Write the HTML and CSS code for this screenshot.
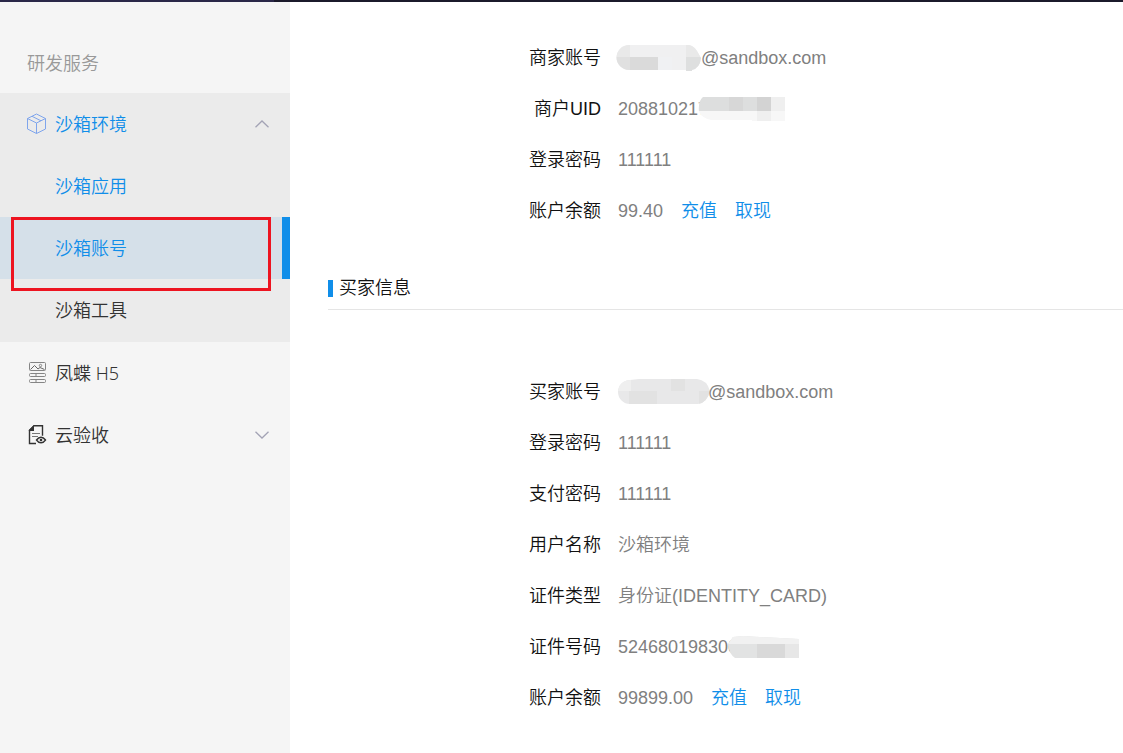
FILE: index.html
```html
<!DOCTYPE html>
<html lang="zh-CN">
<head>
<meta charset="utf-8">
<meta name="viewport" content="width=device-width, initial-scale=1">
<title>沙箱账号</title>
<link rel="stylesheet" href="styles.css">
</head>
<body>
<header class="topbar"><span class="topbar-brand"></span></header>
<div class="layout">
  <nav class="sidebar" aria-label="研发服务">
    <h2 class="sidebar-title">研发服务</h2>
    <div class="group">
      <button class="item item-blue" type="button" aria-expanded="true">
        <svg class="icon" viewBox="0 0 20 22" fill="none" stroke="#7fa5ec" stroke-width="1" stroke-linejoin="round"><path d="M9.500 1 18.500 5.500v10.500L9.500 20.500.5 16V5.500zM.5 5.500l9 4.500 9-4.500M9.500 10v10.500M5 3.300l9 4.500"/></svg>
        <span class="item-text">沙箱环境</span>
        <svg class="arrow" viewBox="0 0 14 8" fill="none" stroke="#a3a3b5" stroke-width="1.300"><path d="M.5 7.200 7 1l6.500 6.200"/></svg>
      </button>
      <a class="item sub item-blue" href="#app">沙箱应用</a>
      <div class="current">
        <a class="item sub item-blue item-active" href="#account" aria-current="page">沙箱账号</a>
        <span class="highlight"></span>
      </div>
      <a class="item sub" href="#tools">沙箱工具</a>
    </div>
    <a class="item" href="#h5">
      <svg class="icon" viewBox="0 0 20 22" fill="none" stroke="#858585" stroke-width="1"><rect x="2.500" y=".5" width="16" height="8" rx="1"/><path stroke="#666" d="m3.500 7.500 4-4 3.500 3.500 2-1.500 4.500 2"/><circle cx="13.500" cy="3.500" r="1.200"/><rect x="2.500" y="11.500" width="16" height="3" rx="1"/><rect x="2.500" y="17.500" width="16" height="3" rx="1"/><path d="M9 11.500v3M9 17.500v3"/></svg>
      <span class="item-text">凤蝶 H5</span>
    </a>
    <button class="item" type="button" aria-expanded="false">
      <svg class="icon" viewBox="0 0 20 22" fill="none" stroke="#333" stroke-width="1.400"><path d="M9 19.500H2.500V6.500L7 1.700h8.500v10"/><path d="M1.800 7V6L7 1v6z" fill="#333" stroke="none"/><path d="M5 9.500h8M5 12.500h6" stroke="#777" stroke-width="1"/><path d="M9.500 16q2-2.800 4.500-2.800t4.500 2.800q-2 2.800-4.500 2.800T9.500 16z" stroke-width="1.400"/><circle cx="14" cy="16" r="1.300" fill="#333" stroke="none"/></svg>
      <span class="item-text">云验收</span>
      <svg class="arrow" viewBox="0 0 14 8" fill="none" stroke="#a3a3b5" stroke-width="1.300"><path d="M.5.8 7 7 13.500.8"/></svg>
    </button>
  </nav>
  <main class="content">
    <dl class="info">
      <dt>商家账号</dt>
      <dd><svg class="mask mask-merchant" viewBox="0 0 85 26"><clipPath id="m1"><path d="M13 0h60q5 1 8 6l4 7q-1 10-9 12v1h-6v-1H13A12 12 0 0 1 13 0z"/></clipPath><g clip-path="url(#m1)"><path fill="#f0f0f1" d="M0 0h85v26H0z"/><path fill="#e9e9e9" d="M0 0h14v12H0zM70 0h15v12H70z"/><path fill="#dadada" d="M14 12h28v14H14z"/><path fill="#e0e0e0" d="M0 12h14v14H0z"/><path fill="#f0f1f3" d="M42 12h14v14H42z"/><path fill="#dedfdf" d="M70 12h15v14H70z"/></g></svg>@sandbox.com</dd>
      <dt>商户UID</dt>
      <dd>208810217<svg class="mask mask-uid" viewBox="0 0 87 24"><clipPath id="m2"><path d="M5 0h82v24H54v-1H13Q4 21 1 15 0 4 5 0z"/></clipPath><g clip-path="url(#m2)"><path fill="#f7f7f7" d="M0 0h87v24H0z"/><path fill="#dddede" d="M0 0h45v14H0z"/><path fill="#d7d7d7" d="M31 0h14v14H31z"/><path fill="#dddede" d="M45 0h14v14H45z"/><path fill="#d3d3d3" d="M59 0h14v14H59z"/><path fill="#efefef" d="M73 0h14v14H73zM59 14h14v10H59z"/></g></svg></dd>
      <dt>登录密码</dt><dd>111111</dd>
      <dt>账户余额</dt><dd>99.40<a class="action" href="#recharge">充值</a><a class="action" href="#withdraw">取现</a></dd>
    </dl>
    <h3 class="section-title">买家信息</h3>
    <dl class="info">
      <dt>买家账号</dt>
      <dd><svg class="mask mask-buyer" viewBox="0 0 92 26"><clipPath id="m3"><path d="M12 1l9-1h58q10 1 13 12-3 12-12 13H12A12 12 0 0 1 12 1z"/></clipPath><g clip-path="url(#m3)"><path fill="#e8e8e9" d="M0 0h92v26H0z"/><path fill="#efefef" d="M0 0h13v12H0z"/><path fill="#e2e2e2" d="M11 12h28v14H11zM53 0h14v12H53zM81 12h11v14H81z"/></g></svg>@sandbox.com</dd>
      <dt>登录密码</dt><dd>111111</dd>
      <dt>支付密码</dt><dd>111111</dd>
      <dt>用户名称</dt><dd>沙箱环境</dd>
      <dt>证件类型</dt><dd>身份证(IDENTITY_CARD)</dd>
      <dt>证件号码</dt>
      <dd>524680198300<svg class="mask mask-id" viewBox="0 0 71 22"><clipPath id="m4"><path d="M0 8 5 1l10-1 56 3v19H7Q1 18 0 8z"/></clipPath><g clip-path="url(#m4)"><path fill="#e2e3e3" d="M0 0h71v22H0z"/><path fill="#f1f1f1" d="M0 0h71v8H0z"/><path fill="#d9d9d9" d="M29 8h28v14H29z"/><path fill="#e7e7e7" d="M57 8h14v14H57z"/></g></svg></dd>
      <dt>账户余额</dt><dd>99899.00<a class="action" href="#recharge-buyer">充值</a><a class="action" href="#withdraw-buyer">取现</a></dd>
    </dl>
  </main>
</div>
</body>
</html>
```
FILE: styles.css
```css
* { box-sizing: border-box; }
body {
  margin: 0;
  min-height: 100vh;
  display: flex;
  flex-direction: column;
  background: #fff;
  color: #111;
  font: 350 18px/26px "Liberation Sans", "Noto Sans CJK SC DemiLight", "Noto Sans CJK SC", sans-serif;
}
.topbar { height: 2px; background: #1b1a2b; }
.topbar-brand { display: block; width: 274px; height: 2px; background: #2a2748; }
.layout { flex: 1; display: flex; }

.sidebar {
  flex: none;
  width: 290px;
  background: #f5f5f5;
  font-family: "Noto Sans", "Noto Sans CJK SC DemiLight", "Noto Sans CJK SC", sans-serif;
}
.sidebar-title {
  margin: 0;
  padding: 48px 27px 17px;
  color: #999;
  font: inherit;
}
.group { background: #ebebeb; padding-bottom: 1px; }
.item {
  display: flex;
  align-items: center;
  width: 100%;
  height: 62px;
  padding: 0 21px 0 27px;
  border: 0;
  background: none;
  color: #333;
  font: inherit;
  text-align: left;
  text-decoration: none;
  cursor: pointer;
}
.item-blue { color: #108ee9; }
.sub { padding-left: 55px; }
.current { position: relative; }
.item-active { background: #d5e0e9; border-right: 8px solid #108ee9; }
.highlight {
  position: absolute;
  top: 0;
  left: 11px;
  right: 19px;
  height: 74px;
  border: 3px solid #ed1420;
  pointer-events: none;
}
.icon { width: 20px; height: 22px; margin-right: 8px; }
.item-text { flex: 1; }
.arrow { width: 14px; height: 8px; }

.content { flex: 1; min-width: 0; padding: 43px 0 16px 38px; }
.info {
  display: grid;
  grid-template-columns: 273px 1fr;
  column-gap: 17px;
  row-gap: 25px;
  margin: 0;
}
.info dt { text-align: right; }
.info dd { display: flex; align-items: center; margin: 0; color: #808080; }
.action { margin-left: 18px; color: #108ee9; text-decoration: none; }
.section-title {
  display: flex;
  align-items: center;
  margin: 51px 0 69px;
  padding-bottom: 8px;
  border-bottom: 1px solid #e5e5e5;
  font: inherit;
}
.section-title::before {
  content: "";
  width: 5px;
  height: 17px;
  margin-right: 6px;
  background: #108ee9;
}
.mask { flex: none; }
.mask-merchant { width: 85px; height: 26px; margin-left: -2px; }
.mask-uid { width: 87px; height: 24px; margin-left: -10px; }
.mask-buyer { width: 92px; height: 26px; margin-right: -2px; }
.mask-id { width: 71px; height: 22px; margin-left: -10px; }
```
